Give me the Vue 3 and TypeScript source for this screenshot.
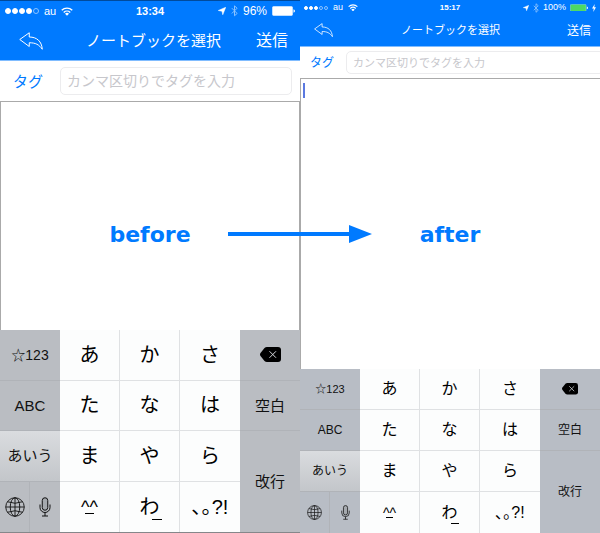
<script setup lang="ts">
interface Phone {
  id: string
  label: string
  time: string
  battery: string
  signal: number
  charging: boolean
}

const phones: Phone[] = [
  { id: 'before', label: 'before', time: '13:34', battery: '96%', signal: 4, charging: false },
  { id: 'after', label: 'after', time: '15:17', battery: '100%', signal: 3, charging: true },
]

const kanaRows: string[][] = [
  ['あ', 'か', 'さ'],
  ['た', 'な', 'は'],
  ['ま', 'や', 'ら'],
]
const modes: string[] = ['☆123', 'ABC', 'あいう']
</script>

<template>
  <main class="compare">
    <section v-for="phone in phones" :key="phone.id" class="phone" :class="phone.id">
      <header class="header">
        <div class="status">
          <div class="status-side">
            <span class="dots">
              <i v-for="n in 5" :key="n" class="dot" :class="{ empty: n > phone.signal }"></i>
            </span>
            <span class="carrier">au</span>
            <svg class="wifi" viewBox="0 0 24 18" fill="none" stroke="#fff" stroke-width="2.8">
              <path d="M1.5 6.5a15 15 0 0 1 21 0M5.5 10.8a9.4 9.4 0 0 1 13 0" />
              <path d="M12 17.5l-4-4a5.8 5.8 0 0 1 8 0z" fill="#fff" stroke="none" />
            </svg>
          </div>
          <span class="time">{{ phone.time }}</span>
          <div class="status-side end">
            <svg class="locate" viewBox="0 0 16 16"><path d="M15.5.5L9.500 15.500 8 8.500.5 7z" fill="#fff" stroke="#fff" /></svg>
            <svg class="bluetooth" viewBox="0 0 12 20" fill="none" stroke="#8cc3ff" stroke-width="1.700">
              <path d="M1.500 5.500l9 9L6 18.500v-17l4.500 4-9 9" />
            </svg>
            <span class="percent">{{ phone.battery }}</span>
            <svg class="battery" viewBox="0 0 46 20">
              <rect x="1" y="1" width="40" height="18" rx="2" :fill="phone.charging ? '#4cd964' : '#fff'" :stroke="phone.charging ? '#b9eedd' : '#fff'" />
              <path d="M43 6.500q3 1 3 3.500t-3 3.500z" fill="#fff" />
            </svg>
            <svg v-if="phone.charging" class="bolt" viewBox="0 0 8 16"><path d="M5.500 0L0 9h3.500L2.500 16 8 6.500H4.500z" fill="#fff" /></svg>
          </div>
        </div>
        <nav class="nav">
          <button class="back" type="button" aria-label="戻る">
            <svg viewBox="0 0 48 36" fill="none" stroke="#fff" stroke-width="2" stroke-linejoin="round">
              <path d="M1.500 15L20.500 1.500v8.500C36 10 45.500 19 46.500 34.500 40 25 33 21.500 20.500 21.500V29z" />
            </svg>
          </button>
          <h1 class="title">ノートブックを選択</h1>
          <button class="send" type="button">送信</button>
        </nav>
      </header>
      <div class="tags">
        <label :for="`tag-${phone.id}`">タグ</label>
        <input :id="`tag-${phone.id}`" type="text" placeholder="カンマ区切りでタグを入力" />
      </div>
      <div class="editor">
        <textarea :aria-label="phone.label"></textarea>
        <span v-if="phone.charging" class="caret"></span>
      </div>
      <div class="keyboard">
        <div class="column side">
          <button v-for="(mode, i) in modes" :key="mode" type="button" class="key" :class="`mode-${i}`">{{ mode }}</button>
          <div class="pair">
            <button class="key" type="button" aria-label="キーボード切替">
              <svg class="globe" viewBox="0 0 40 40" fill="none" stroke="#111" stroke-width="1.800">
                <circle cx="20" cy="20" r="18.500" />
                <ellipse cx="20" cy="20" rx="9.500" ry="18.500" />
                <path d="M20 1.500v37M1.500 20h37M5 9.500q15 6 30 0M5 30.500q15-6 30 0" />
              </svg>
            </button>
            <button class="key" type="button" aria-label="音声入力">
              <svg class="mic" viewBox="0 0 24 40" fill="none" stroke="#111" stroke-width="2">
                <rect x="6.500" y="1.500" width="11" height="25" rx="5.500" fill="#a5a9ae" />
                <path d="M2 15v6a10 10 0 0 0 20 0v-6M12 31v7M6 38h12" />
              </svg>
            </button>
          </div>
        </div>
        <div class="kana">
          <template v-for="row in kanaRows" :key="row[0]">
            <button v-for="kana in row" :key="kana" type="button" class="key">{{ kana }}</button>
          </template>
          <button class="key" type="button"><span class="face">^^</span></button>
          <button class="key" type="button"><span class="wa">わ</span></button>
          <button class="key" type="button">､｡?!</button>
        </div>
        <div class="column side">
          <button class="key" type="button" aria-label="削除">
            <svg class="delete" viewBox="0 0 42 30">
              <path d="M14 0h22q6 0 6 6v18q0 6-6 6H14q-3 0-5-2L1 18q-2-3 0-6L9 2q2-2 5-2z" fill="#000" />
              <path d="M19 8.500l13 13M32 8.500l-13 13" stroke="#d5d7da" stroke-width="2" />
            </svg>
          </button>
          <button class="key" type="button">空白</button>
          <button class="key tall" type="button">改行</button>
        </div>
      </div>
    </section>
    <div class="captions">
      <strong v-for="phone in phones" :key="phone.id">{{ phone.label }}</strong>
      <svg class="arrow" viewBox="0 0 144 18" fill="#007aff"><path d="M0 7h121V0l23 9-23 9v-7H0z" /></svg>
    </div>
  </main>
</template>

<style>
body {
  margin: 0;
  background: #fff;
}
</style>

<style scoped>
.compare {
  position: relative;
  display: grid;
  grid-template-columns: 1fr 1fr;
  min-height: 100vh;
  overflow: hidden;
  font-family: "Liberation Sans", "Noto Sans CJK JP", sans-serif;
}
* {
  box-sizing: border-box;
}
button {
  margin: 0;
  padding: 0;
  border: 0;
  background: none;
  font: inherit;
  color: inherit;
}
svg {
  display: block;
  flex: none;
}
.phone {
  display: flex;
  flex-direction: column;
  min-width: 0;
  overflow: hidden;
}
.before {
  --status-h: 20px;
  --status-pad: 5px;
  --nav-h: 39px;
  --nav-pad: 0 12px 0 19px;
  --back-inset: 0;
  --dot: 6px;
  --status-gap: 5px;
  --end-gap: 5px;
  --status-font: 12px;
  --carrier-font: 11px;
  --time-font: 11px;
  --wifi: 12px;
  --locate: 8px;
  --bluetooth: 7px;
  --battery: 23px;
  --back: 24px;
  --title: 15px;
  --tag: 15px;
  --send: 16px;
  --tags-h: 40px;
  --tags-pad: 13px;
  --tag-w: 47px;
  --input-h: 28px;
  --input-end: 8px;
  --placeholder: 14px;
  --keys-h: 203px;
  --kana: 20px;
  --side: 15px;
  --num: 14px;
  --face: 18px;
  --side-bg: #babdc2;
  --globe: 20px;
  --mic: 12px;
  --delete: 21px;
}
.after {
  --status-h: 15px;
  --status-pad: 4px;
  --nav-h: 31px;
  --nav-pad: 0 9px 0 10px;
  --back-inset: 4px;
  --dot: 4px;
  --status-gap: 5px;
  --end-gap: 4px;
  --status-font: 9px;
  --carrier-font: 9px;
  --time-font: 8px;
  --wifi: 10px;
  --locate: 6px;
  --bluetooth: 6px;
  --battery: 18px;
  --back: 19px;
  --title: 11px;
  --tag: 12px;
  --send: 12px;
  --tags-h: 31px;
  --tags-pad: 10px;
  --tag-w: 36px;
  --input-h: 23px;
  --input-end: -4px;
  --placeholder: 11px;
  --keys-h: 164px;
  --kana: 16px;
  --side: 12px;
  --num: 11px;
  --face: 14px;
  --side-bg: #b8bdc5;
  --globe: 15px;
  --mic: 9px;
  --delete: 16px;
}
.header {
  background: #007aff;
  border-bottom: 1px solid #80bcff;
  color: #fff;
}
.before .header {
  border-top: 1px solid #004a9c;
}
.status {
  display: grid;
  grid-template-columns: 1fr auto 1fr;
  align-items: center;
  height: var(--status-h);
  padding: 0 var(--status-pad);
  line-height: 1;
}
.status-side {
  display: flex;
  align-items: center;
  gap: var(--status-gap);
}
.end {
  justify-content: flex-end;
  gap: var(--end-gap);
}
.dots {
  display: flex;
  gap: 1px;
}
.dot {
  width: var(--dot);
  height: var(--dot);
  border: 1px solid #fff;
  border-radius: 50%;
  background: #fff;
}
.dot.empty {
  background: none;
  border-color: #8cc3ff;
}
.carrier {
  font-size: var(--carrier-font);
}
.percent {
  font-size: var(--status-font);
}
.time {
  font-size: var(--time-font);
  font-weight: bold;
}
.wifi {
  width: var(--wifi);
}
.locate {
  width: var(--locate);
}
.bluetooth {
  width: var(--bluetooth);
}
.battery {
  width: var(--battery);
}
.bolt {
  width: 4px;
}
.nav {
  display: grid;
  grid-template-columns: 1fr auto 1fr;
  align-items: center;
  height: var(--nav-h);
  padding: var(--nav-pad);
  line-height: 1;
}
.back {
  justify-self: start;
  padding-left: var(--back-inset);
}
.back svg {
  width: var(--back);
}
.title {
  margin: 0;
  font-size: var(--title);
  font-weight: 400;
  white-space: nowrap;
}
.send {
  justify-self: end;
  font-size: var(--send);
}
.tags {
  display: flex;
  align-items: center;
  height: var(--tags-h);
  padding-left: var(--tags-pad);
}
.tags label {
  flex: none;
  width: var(--tag-w);
  font-size: var(--tag);
  line-height: 1;
  color: #007aff;
}
.tags input {
  flex: 1;
  min-width: 0;
  height: var(--input-h);
  margin: 0 var(--input-end) 0 0;
  padding: 0 6px;
  border: 1px solid #ececee;
  border-radius: 5px;
  outline: 0;
  background: #fff;
  font: 400 var(--placeholder) "Liberation Sans", "Noto Sans CJK JP", sans-serif;
}
.tags input::placeholder {
  color: #c7c7cc;
  opacity: 1;
}
.editor {
  position: relative;
  display: flex;
  flex: 1;
  min-height: 120px;
}
.editor textarea {
  flex: 1;
  width: 100%;
  margin: 0;
  padding: 4px;
  border: 1px solid #aaa;
  border-bottom: 0;
  outline: 0;
  resize: none;
  background: #fff;
}
.after textarea {
  border-right: 0;
}
.caret {
  position: absolute;
  top: 5px;
  left: 3px;
  width: 2px;
  height: 15px;
  background: #5b79e0;
}
.keyboard {
  display: grid;
  grid-template-columns: 1fr 3fr 1fr;
  height: var(--keys-h);
  color: #000;
  line-height: 1;
}
.before .keyboard {
  border-bottom: 1px solid #85878a;
}
.column {
  display: grid;
  grid-template-rows: repeat(4, 1fr);
  background: var(--side-bg);
  font-size: var(--side);
  color: #111;
}
.kana {
  display: grid;
  grid-template-columns: repeat(3, 1fr);
  grid-template-rows: repeat(4, 1fr);
  background: #fcfdfd;
  font-size: var(--kana);
}
.key {
  display: flex;
  align-items: center;
  justify-content: center;
  min-width: 0;
  border-bottom: 1px solid #dfe1e3;
  white-space: nowrap;
}
.kana .key {
  border-right: 1px solid #dfe1e3;
}
.kana .key:nth-child(3n) {
  border-right: 0;
}
.kana .key:nth-child(n + 10) {
  border-bottom: 0;
}
.side .key {
  border-color: #b0b3b8;
}
.side .mode-0 {
  font-size: var(--num);
}
.side .mode-2 {
  background: linear-gradient(#dadcdf, #c3c6ca);
}
.side .tall {
  grid-row: span 2;
  border-bottom: 0;
}
.pair {
  display: grid;
  grid-template-columns: 1fr 1fr;
}
.pair .key {
  border-bottom: 0;
}
.pair .key:first-child {
  border-right: 1px solid #b0b3b8;
}
.globe {
  width: var(--globe);
}
.mic {
  width: var(--mic);
}
.delete {
  width: var(--delete);
}
.face,
.wa {
  position: relative;
}
.face {
  font-size: var(--face);
}
.face::after,
.wa::after {
  content: "";
  position: absolute;
  height: 1px;
  background: #000;
}
.face::after {
  left: 22%;
  right: 22%;
  bottom: 2px;
}
.wa::after {
  left: 60%;
  width: 50%;
  bottom: -3px;
}
.captions {
  position: absolute;
  top: 223px;
  left: 0;
  right: 0;
  display: grid;
  grid-template-columns: 1fr 1fr;
  justify-items: center;
  font: bold 22px/24px "DejaVu Sans", sans-serif;
  color: #007aff;
  pointer-events: none;
}
.arrow {
  position: absolute;
  top: 2px;
  left: 38%;
  width: 24%;
}
</style>
